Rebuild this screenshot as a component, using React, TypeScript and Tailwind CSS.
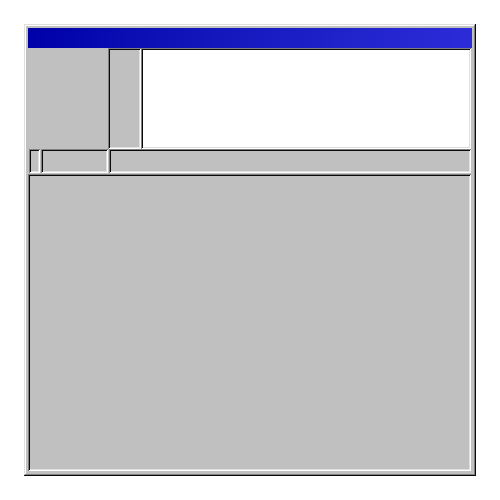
import React from 'react';

const raised =
  'shadow-[inset_-1px_-1px_#0a0a0a,inset_1px_1px_#dfdfdf,inset_-2px_-2px_#808080,inset_2px_2px_#ffffff]';
const sunken =
  'shadow-[inset_1px_1px_#808080,inset_-1px_-1px_#ffffff,inset_2px_2px_#0a0a0a,inset_-2px_-2px_#dfdfdf]';

export default function App() {
  return (
    <div className="w-[500px] h-[500px] bg-white p-[24px]">
      <div className={`w-[452px] h-[452px] bg-[#c0c0c0] p-[4px] flex flex-col ${raised}`}>
        {/* title bar */}
        <div className="h-[20px] shrink-0 bg-linear-to-r from-[#0000a8] to-[#2c2cd8]" />

        {/* top area */}
        <div className="flex h-[101px] shrink-0">
          <div className="w-[80px]" />
          <div className={`w-[33px] ${sunken}`} />
          <div className={`flex-1 mr-[1px] bg-white ${sunken}`} />
        </div>

        {/* status row */}
        <div className="flex h-[25px] shrink-0 gap-[1px] pl-[1px] pr-[1px] pb-[1px]">
          <div className={`w-[11px] ${sunken}`} />
          <div className={`w-[67px] ${sunken}`} />
          <div className={`flex-1 ${sunken}`} />
        </div>

        {/* main pane */}
        <div className={`flex-1 mr-[1px] mb-[1px] ${sunken}`} />
      </div>
    </div>
  );
}
